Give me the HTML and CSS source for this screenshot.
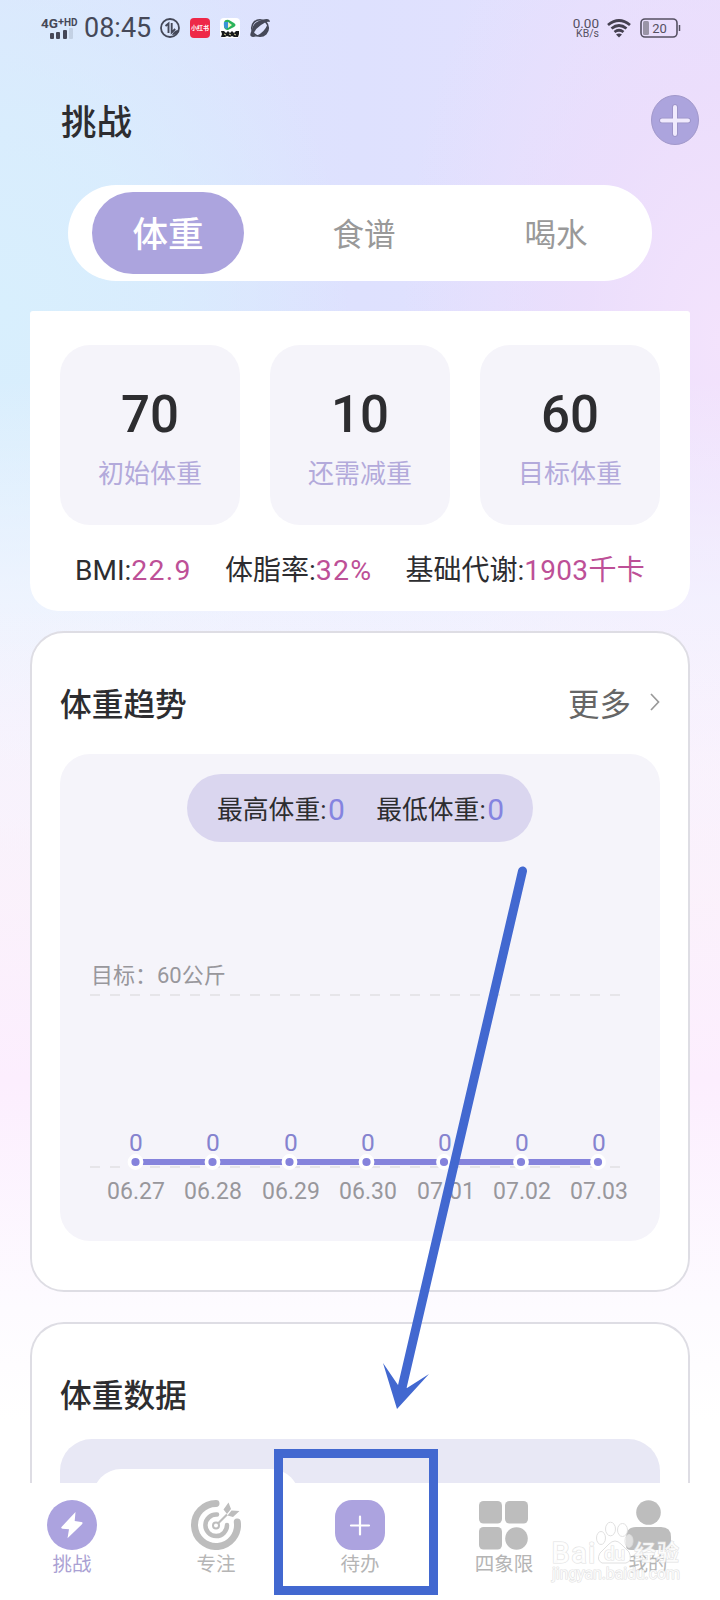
FILE: index.html
```html
<!DOCTYPE html>
<html lang="zh-CN">
<head>
<meta charset="utf-8">
<title>挑战</title>
<link rel="stylesheet" href="styles.css">
</head>
<body>
<div class="screen">
  <header class="status">
    <div class="signal">
      <div class="network">4G<sup>+</sup><small>HD</small></div>
      <svg width="24" height="11" viewBox="0 0 24 11"><rect x="0" y="5" width="4" height="6" rx="1"/><rect x="6" y="4" width="4" height="7" rx="1"/><rect x="13" y="2" width="4" height="9" rx="1"/><rect x="19" y="0" width="4" height="11" rx="1" opacity=".15"/></svg>
    </div>
    <div class="clock">08:45</div>
    <svg class="app" viewBox="0 0 20 20"><circle cx="10" cy="10" r="9" fill="none" stroke="#454858" stroke-width="1.800"/><path d="M5.500 8 8.500 5.500V15M11.700 5v9.500l3.500-3.500" fill="none" stroke="#454858" stroke-width="1.900"/><path d="M12 17Q14 12 19 12Q17 17 12 17Z" fill="#454858"/></svg>
    <div class="app redbook">小红书</div>
    <svg class="app" viewBox="0 0 20 20"><rect width="20" height="20" rx="4" fill="#fff"/><path d="M4 4Q5 1 9 2l5 3q3 2 0 4L8 12Q4 12 4 8Z" fill="#2bb35b"/><path d="M4 4Q3 9 6 11l3-2V4Z" fill="#3a94d8"/><path d="m8 4 4 3-4 3Z" fill="#f4f6c0"/><path d="M1 13h3l2 2 2-2 2 2 2-2 2 2 2-2h3v3l-1 3h-4l-2-1-2 1-3-1-2 1H1l1-3Z" fill="#18191b"/><path d="m4 16 2 1M9 16l2 1M14 16l2 1" stroke="#d7d59a"/></svg>
    <svg class="app" viewBox="0 0 20 20"><circle cx="10" cy="10" r="8.300" fill="none" stroke="#454858" stroke-width="1.600"/><path d="M2 12Q3 4 12 2Q20-.5 19.800 4Q17 2.500 11 7Q5 11 3.500 16Q5 17.500 8 18Q-.5 20.500 .4 16Q.8 14 2 12Z" fill="#454858"/><path d="M7 17.500Q14.500 14 17.500 6.500Q20 14 13 17.500Q10 19 7 17.500Z" fill="#454858"/></svg>
    <div class="speed"><b>0.00</b><span>KB/s</span></div>
    <svg class="wifi" width="24" height="19" viewBox="0 0 24 19" fill="none" stroke="#454050" stroke-width="2.800"><path d="M1 6Q12-3 23 6M4.500 9.500Q12 3.500 19.500 9.500M7.500 13Q12 9.500 16.500 13"/><path d="M9 15.500q3-2 6 0l-3 3Z" fill="#454050" stroke="none"/></svg>
    <svg class="battery" width="41" height="20" viewBox="0 0 41 20"><rect x="1" y="1" width="36" height="18" rx="4" fill="none" stroke="#555062" stroke-width="1.600"/><rect x="3" y="3" width="6" height="14" rx="1.500" fill="#9a94a6"/><path d="M39.500 7v6" stroke="#555062" stroke-width="1.500"/><text x="19.500" y="14.600">20</text></svg>
  </header>

  <div class="heading">
    <h1>挑战</h1>
    <svg width="48" height="50" viewBox="0 0 48 50"><ellipse cx="24" cy="25" rx="23.500" ry="24.500" fill="#aca4dd" stroke="#a198ca"/><path d="M24 12v27M11 25.500h26" stroke="#9990c4" stroke-width="5.600" stroke-linecap="round"/><path d="M24 12v27M11 25.500h26" stroke="#f0eafd" stroke-width="4" stroke-linecap="round"/></svg>
  </div>

  <nav class="tabs"><div class="tab active">体重</div><div class="tab diet">食谱</div><div class="tab water">喝水</div></nav>

  <section class="summary">
    <div class="tiles">
      <div class="tile"><strong>70</strong><span>初始体重</span></div>
      <div class="tile"><strong>10</strong><span>还需减重</span></div>
      <div class="tile"><strong>60</strong><span>目标体重</span></div>
    </div>
    <div class="metrics"><p>BMI:<em>22.9</em></p><p>体脂率:<em>32%</em></p><p>基础代谢:<em>1903千卡</em></p></div>
  </section>

  <section class="card trend">
    <div class="card-head"><h2>体重趋势</h2><div class="more"><span>更多</span><svg width="10" height="18" viewBox="0 0 10 18"><path d="m1 1 7.500 8L1 17" fill="none" stroke="#999" stroke-width="1.700"/></svg></div></div>
    <div class="chart-box">
      <div class="range"><p>最高体重:<em>0</em></p><p>最低体重:<em>0</em></p></div>
      <svg class="chart" width="600" height="399" viewBox="60 842 600 399">
        <path d="M90 995H620M90 1167H620" stroke="#e6e5e9" stroke-width="2" stroke-dasharray="10 10"/>
        <text class="goal" x="91" y="983">目标：60公斤</text>
        <path d="M135 1162H598" stroke="#8583dc" stroke-width="6"/>
        <g fill="#8583dc" stroke="#fff" stroke-width="3.800"><circle cx="135.500" cy="1162" r="6"/><circle cx="212.500" cy="1162" r="6"/><circle cx="289.500" cy="1162" r="6"/><circle cx="366.500" cy="1162" r="6"/><circle cx="444" cy="1162" r="6"/><circle cx="521" cy="1162" r="6"/><circle cx="598" cy="1162" r="6"/></g>
        <g class="values"><text x="136" y="1150.500">0</text><text x="213" y="1150.500">0</text><text x="291" y="1150.500">0</text><text x="368" y="1150.500">0</text><text x="445" y="1150.500">0</text><text x="522" y="1150.500">0</text><text x="599" y="1150.500">0</text></g>
        <g class="dates"><text x="136" y="1199">06.27</text><text x="213" y="1199">06.28</text><text x="291" y="1199">06.29</text><text x="368" y="1199">06.30</text><text x="446" y="1199">07.01</text><text x="522" y="1199">07.02</text><text x="599" y="1199">07.03</text></g>
      </svg>
    </div>
  </section>

  <section class="card data">
    <h2>体重数据</h2>
    <div class="data-box"><div class="data-inner"></div></div>
  </section>

  <footer class="bottom">
    <div class="item on"><svg viewBox="0 0 50 50"><circle cx="25" cy="25" r="25" fill="#aca3df"/><path d="M28.500 12 14.500 27q-1 1.500 1 1.700l6.500.5-1.500 9 14.500-14q1.500-1.800-.8-2.200l-6.500-1Z" fill="#fff"/></svg><span>挑战</span></div>
    <div class="item"><svg viewBox="0 0 50 50" fill="none" stroke="#bdbdbd"><path d="M25 3.500A21.500 21.500 0 1 0 46.300 22" stroke-width="7" stroke-linecap="round"/><path d="M26 14.500A10.800 10.800 0 1 0 36 25" stroke-width="4.500" stroke-linecap="round"/><circle cx="25" cy="25.500" r="3" stroke-width="2"/><path d="m27 23.500 9-9" stroke-width="2.200"/><path d="m32.500 9.500 5-7 2.500 6.500-4 5ZM36.500 15.500l4-5 8 .5-6.500 6Z" fill="#bdbdbd" stroke="none"/></svg><span>专注</span></div>
    <div class="item"><svg viewBox="0 0 50 50"><rect width="50" height="50" rx="17" fill="#aca3df"/><path d="M25 16.500v18M16 25.500h18" stroke="#fff" stroke-width="2.200" stroke-linecap="round"/></svg><span>待办</span></div>
    <div class="item"><svg viewBox="0 0 50 50" fill="#bdbdbd"><rect x="0" y="1" width="23" height="22.500" rx="4.500"/><rect x="26" y="1" width="23" height="22.500" rx="4.500"/><rect x="0" y="27" width="23" height="22.500" rx="4.500"/><circle cx="37.500" cy="38.500" r="11.300"/></svg><span>四象限</span></div>
    <div class="item"><svg viewBox="0 0 50 50" fill="#bdbdbd"><circle cx="25.500" cy="12.500" r="12.300"/><path d="M3 38Q3 27 13 27H38Q48 27 48 37V50H8Q3 50 3 46Z"/></svg><span>我的</span></div>
  </footer>

  <svg class="watermark" width="150" height="70" viewBox="545 1515 150 70">
    <g fill="#fff" fill-opacity=".55" stroke="#dcdcdc" stroke-width=".9"><ellipse cx="601" cy="1538" rx="4.500" ry="6.500"/><ellipse cx="610.500" cy="1529" rx="5" ry="6.800"/><ellipse cx="622.500" cy="1530" rx="5" ry="6.500"/><ellipse cx="629" cy="1541" rx="4" ry="6.500"/><path d="M602 1563Q596 1560 600 1553L609 1544Q615 1538 621 1544L629 1552Q633 1561 626 1563Z"/></g>
    <text class="brand" x="551.500" y="1562.500" textLength="44">Bai</text><text class="du" x="604" y="1560" textLength="21">du</text><text class="brand cn" x="634" y="1560" textLength="45">经验</text><text class="url" x="552" y="1578.500" textLength="128">jingyan.baidu.com</text>
  </svg>
  <svg class="annotation" width="720" height="1600" viewBox="0 0 720 1600"><path d="M522.500 871 401.500 1390" stroke="#4268d0" stroke-width="9" stroke-linecap="round"/><path d="m397 1409-14-46 15 22 9 3 22-14Z" fill="#4268d0"/></svg>
  <div class="marker"></div>
</div>
</body>
</html>
```
FILE: styles.css
```css
* { box-sizing: border-box; }
body { margin: 0; }
h1, h2, p { margin: 0; }
em { font-style: normal; }
svg { display: block; flex: none; }

.screen {
  position: relative;
  width: 720px;
  height: 1600px;
  overflow: hidden;
  display: flex;
  flex-direction: column;
  font-family: Roboto, "Noto Sans CJK SC", sans-serif;
  color: #2d2d30;
  background:
    linear-gradient(to bottom, rgba(253, 240, 250, 0) 600px, rgba(253, 240, 250, .7) 900px, #fceefe 1080px, #fdfbff 1310px, #fff 1420px),
    linear-gradient(to bottom, rgba(246, 248, 255, 0) 380px, rgba(246, 248, 255, .7) 600px, rgba(250, 248, 255, .8) 760px),
    radial-gradient(ellipse 350px 420px at 0 310px, #d8effd 0%, rgba(216, 239, 253, .75) 45%, rgba(216, 239, 253, 0) 100%),
    radial-gradient(ellipse 320px 560px at 720px 340px, #f3e3fc 0%, rgba(239, 221, 251, .65) 45%, rgba(239, 221, 251, 0) 100%),
    linear-gradient(90deg, #dce6fd 0%, #dee1fe 50%, #e6e0fe 100%);
}

.status { height: 56px; padding: 16px 39px 0 41px; display: flex; align-items: flex-start; color: #454858; }
.signal { width: 43px; display: flex; flex-direction: column; gap: 1px; }
.signal svg { margin-left: 9px; fill: #454858; }
.network { height: 11px; font-size: 13.500px; line-height: 13px; font-weight: 700; white-space: nowrap; }
.network sup { font-size: 11px; line-height: 0; vertical-align: 3px; }
.network small { font-size: 10px; vertical-align: 2px; }
.clock { width: 76px; font-size: 27px; line-height: 24px; }
.app { width: 20px; height: 20px; margin: 2px 10px 0 0; }
.redbook { flex: none; border-radius: 4px; background: #ee2848; color: #fff; font-size: 6px; line-height: 20px; text-align: center; font-weight: 700; white-space: nowrap; }
.speed { margin-left: auto; width: 32px; display: flex; flex-direction: column; align-items: flex-end; font-size: 10.500px; line-height: 10px; color: #555062; padding: 1px 5px 0 0; }
.speed b { font-weight: 400; font-size: 13.500px; line-height: 12px; }
.wifi { margin: 3px 9px 0 3px; }
.battery { margin-top: 2px; }
.battery text { font-size: 13px; text-anchor: middle; fill: #555062; }

.heading { height: 129px; padding: 39px 21px 0 61px; display: flex; justify-content: space-between; align-items: flex-start; }
h1 { font-size: 35.500px; line-height: 57px; font-weight: 500; }

.tabs { flex: none; width: 584px; height: 96px; margin-left: 68px; padding: 7px 19px 7px 24px; border-radius: 48px; background: #fff; display: flex; color: #999; font-size: 31.500px; }
.tab { flex: none; width: 152px; height: 82px; line-height: 87px; text-align: center; }
.active { border-radius: 41px; background: #aca4de; color: #fff; font-size: 35.500px; font-weight: 500; }
.diet { margin-left: 44px; }
.water { margin-left: 40px; }

.summary { flex: none; width: 660px; height: 300px; margin: 30px 0 0 30px; padding: 34px 30px 0; border-radius: 3px 3px 28px 28px; background: #fff; }
.tiles { display: flex; justify-content: space-between; }
.tile { width: 180px; height: 180px; padding-top: 41px; border-radius: 30px; background: #f5f4fa; display: flex; flex-direction: column; align-items: center; }
.tile strong { font-size: 51px; font-weight: 500; line-height: 58px; }
.tile span { margin-top: 11px; font-size: 26px; line-height: 38px; color: #b3aadb; }
.metrics { margin-top: 25px; padding: 0 15px; display: flex; justify-content: space-between; font-size: 28px; line-height: 42px; white-space: nowrap; }
.metrics em { color: #bd5097; font-size: 28.500px; letter-spacing: 1.2px; }
.metrics p:last-child em { font-size: 28px; letter-spacing: .3px; }

.card { flex: none; width: 660px; margin-left: 30px; border: 2px solid #dedde4; border-radius: 34px; background: #fff; }
h2 { font-size: 31.700px; line-height: 48px; font-weight: 500; }
.trend { height: 661px; margin-top: 20px; padding: 49px 28px 0; }
.card-head { display: flex; justify-content: space-between; }
.more { display: flex; align-items: flex-start; gap: 19px; font-size: 31.500px; line-height: 48px; color: #666; }
.more svg { margin-top: 11px; }
.chart-box { height: 487px; margin-top: 24px; padding-top: 20px; border-radius: 30px; background: #f5f4fa; }
.range { width: 346px; height: 68px; margin: 0 auto; padding: 0 29px 0 30px; border-radius: 34px; background: #dad6ef; display: flex; justify-content: space-between; font-size: 25.800px; line-height: 72px; white-space: nowrap; }
.range em { margin-left: 1.500px; color: #8584e0; font-size: 30px; line-height: 1; vertical-align: -1px; }
.goal { font-size: 22px; fill: #98979c; }
.values { font-size: 24.500px; text-anchor: middle; fill: #8583cf; }
.dates { font-size: 23px; text-anchor: middle; fill: #98979c; }

.data { height: 161px; margin-top: 30px; padding: 49px 28px 0; border-bottom: 0; border-radius: 34px 34px 0 0; }
.data-box { height: 44px; margin-top: 18px; padding: 30px 0 0 33px; border-radius: 32px 32px 0 0; background: #e8e8f5; overflow: hidden; }
.data-inner { width: 206px; height: 60px; border-radius: 28px; background: #fff; }

.bottom { flex: none; height: 117px; padding-top: 17px; background: #fff; display: flex; }
.item { width: 144px; display: flex; flex-direction: column; align-items: center; font-size: 19.500px; color: #b5b5b5; }
.item svg { width: 50px; height: 50px; }
.item span { line-height: 28px; margin-top: 1px; }
.item.on { color: #aaa1d3; }

.annotation { position: absolute; left: 0; top: 0; }
.marker { position: absolute; left: 274px; top: 1449px; width: 164px; height: 146px; border: 9px solid #4268d0; }
.watermark { position: absolute; left: 545px; top: 1515px; }
.watermark text { fill: #fff; stroke: #dadada; stroke-width: 1.2px; fill-opacity: .85; stroke-opacity: .8; paint-order: stroke; }
.brand { font-size: 29px; font-weight: 500; }
.watermark .cn { font-size: 22px; }
.watermark .du { font-size: 19px; font-weight: 500; }
.watermark .url { font-size: 16px; }
```
